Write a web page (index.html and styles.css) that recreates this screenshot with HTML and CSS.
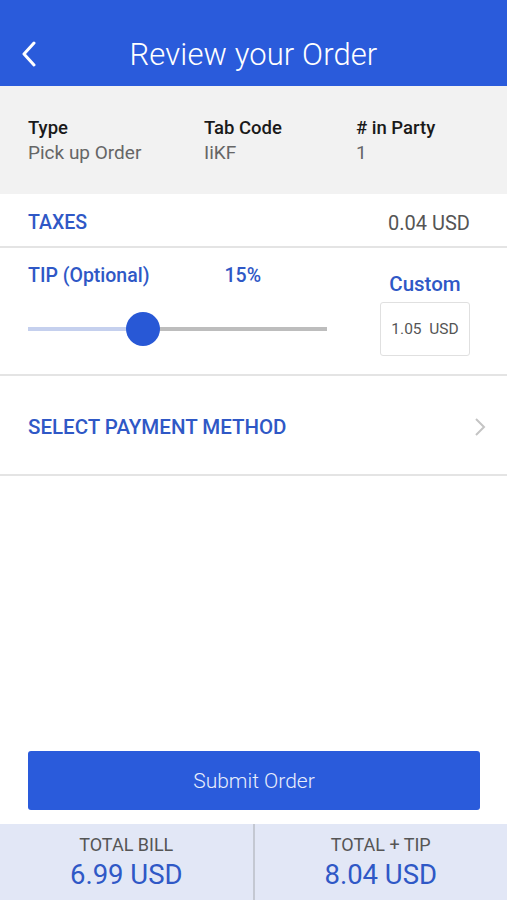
FILE: index.html
```html
<!DOCTYPE html>
<html>
<head>
<meta charset="utf-8">
<link rel="stylesheet" href="styles.css">
</head>
<body>
<div class="app">
  <header class="topbar">
    <svg class="back" width="16" height="26" viewBox="0 0 16 26"><path d="M13 2 L3 13 L13 24" fill="none" stroke="#fff" stroke-width="3" stroke-linecap="round" stroke-linejoin="round"/></svg>
    <h1 class="title">Review your Order</h1>
  </header>
  <section class="info">
    <div class="col c1"><div class="lbl">Type</div><div class="val">Pick up Order</div></div>
    <div class="col c2"><div class="lbl">Tab Code</div><div class="val">IiKF</div></div>
    <div class="col c3"><div class="lbl"># in Party</div><div class="val">1</div></div>
  </section>
  <section class="row taxes">
    <span class="blue">TAXES</span>
    <span class="amt">0.04 USD</span>
  </section>
  <section class="row tip">
    <div class="tip-left">
      <div class="tip-head"><span class="blue">TIP (Optional)</span><span class="blue pct">15%</span></div>
      <div class="slider">
        <div class="track-fill"></div>
        <div class="track-rest"></div>
        <div class="thumb"></div>
      </div>
    </div>
    <div class="tip-right">
      <div class="blue custom">Custom</div>
      <div class="box">1.05&nbsp; USD</div>
    </div>
  </section>
  <section class="row pay">
    <span class="blue paylbl">SELECT PAYMENT METHOD</span>
    <svg class="chev" width="12" height="20" viewBox="0 0 12 20"><path d="M2 2 L10 10 L2 18" fill="none" stroke="#c4c4c4" stroke-width="2"/></svg>
  </section>
  <div class="spacer"></div>
  <div class="btn-wrap"><button class="submit">Submit Order</button></div>
  <footer class="totals">
    <div class="tot"><div class="tl">TOTAL BILL</div><div class="tv">6.99 USD</div></div>
    <div class="divider"></div>
    <div class="tot"><div class="tl">TOTAL + TIP</div><div class="tv">8.04 USD</div></div>
  </footer>
</div>
</body>
</html>
```
FILE: styles.css
```css
* { box-sizing: border-box; }
html, body { margin: 0; padding: 0; }
body { font-family: Roboto, "Noto Sans", sans-serif; background: #fff; }
.app { width: 507px; height: 900px; display: flex; flex-direction: column; overflow: hidden; }
.topbar { height: 86px; background: #2a5bdb; display: flex; align-items: center; justify-content: center; position: relative; flex-shrink: 0; }
.back { position: absolute; left: 21px; top: 41px; }
.title { margin: 0; margin-top: 22px; font-weight: 300; font-size: 31px; color: #fff; letter-spacing: 0.1px; }
.info { height: 108px; background: #f2f2f2; display: flex; padding: 31px 0 0 28px; flex-shrink: 0; }
.col { display: flex; flex-direction: column; }
.c1 { width: 176px; }
.c2 { width: 152px; }
.lbl { font-size: 18.5px; font-weight: 500; color: #1a1a1a; line-height: 22px; }
.val { font-size: 19px; color: #666; line-height: 22px; margin-top: 3px; }
.row { border-bottom: 2px solid #e4e4e4; flex-shrink: 0; }
.blue { color: #2f58c6; font-weight: 500; font-size: 19.5px; }
.taxes { margin-top: 3px; height: 51px; display: flex; align-items: center; justify-content: space-between; padding: 2px 37px 0 28px; }
.amt { font-size: 20px; color: #555; }
.tip { height: 128px; display: flex; padding: 0 37px 0 28px; }
.tip-left { width: 299px; display: flex; flex-direction: column; }
.tip-head { display: flex; padding-top: 17px; line-height: 22px; }
.pct { margin-left: 75px; }
.slider { position: relative; height: 34px; margin-top: 25px; }
.track-fill { position: absolute; left: 0; top: 15px; width: 115px; height: 4px; background: #c5d0ee; }
.track-rest { position: absolute; left: 115px; top: 15px; right: 0; height: 4px; background: #bdbdbd; }
.thumb { position: absolute; left: 98px; top: 0; width: 34px; height: 34px; border-radius: 50%; background: #2858d6; }
.tip-right { margin-left: auto; display: flex; flex-direction: column; align-items: center; width: 90px; }
.custom { font-size: 20.5px; margin-top: 23px; line-height: 26px; }
.box { margin-top: 5px; width: 90px; height: 54px; border: 1px solid #e0e0e0; border-radius: 3px; display: flex; align-items: center; justify-content: center; font-size: 15.5px; color: #555; }
.pay { height: 100px; display: flex; align-items: center; justify-content: space-between; padding: 3px 21px 0 28px; }
.paylbl { font-size: 20.5px; }
.spacer { flex: 1; }
.btn-wrap { padding: 0 27px 14px 28px; }
.submit { display: block; width: 100%; height: 59px; border: none; border-radius: 3px; background: #2a5bdb; color: #e8eefc; font-family: Roboto, sans-serif; font-weight: 300; font-size: 21px; padding: 0; }
.totals { height: 76px; background: #e2e7f6; display: flex; flex-shrink: 0; }
.tot { flex: 1; display: flex; flex-direction: column; align-items: center; padding-top: 10px; }
.divider { width: 2px; background: #c4c8d2; }
.tl { font-size: 18px; color: #555; line-height: 22px; }
.tv { font-size: 27.5px; color: #2f58c6; line-height: 32px; margin-top: 3px; }
```
